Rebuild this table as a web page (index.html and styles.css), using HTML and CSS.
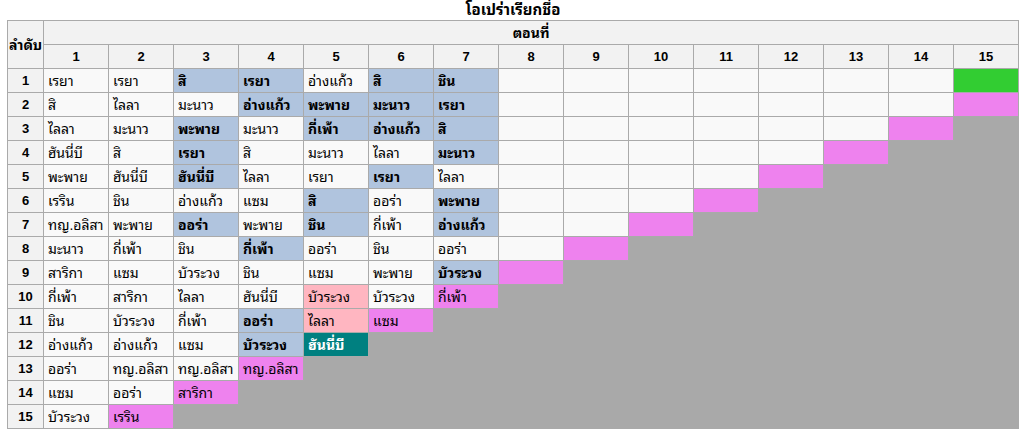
FILE: index.html
```html
<!DOCTYPE html>
<html lang="th">
<head>
<meta charset="utf-8">
<title>โอเปร่าเรียกชื่อ</title>
<link rel="stylesheet" href="styles.css">
</head>
<body>
<table class="wikitable">
<caption>โอเปร่าเรียกชื่อ</caption>
<colgroup>
<col class="c-rank">
<col span="15" class="c-ep">
</colgroup>
<thead>
<tr><th rowspan="2" class="rank-h">ลำดับ</th><th colspan="15" class="ep-h">ตอนที่</th></tr>
<tr><th>1</th><th>2</th><th>3</th><th>4</th><th>5</th><th>6</th><th>7</th><th>8</th><th>9</th><th>10</th><th>11</th><th>12</th><th>13</th><th>14</th><th>15</th></tr>
</thead>
<tbody>
<tr><th>1</th><td>เรยา</td><td>เรยา</td><td class="b">สิ</td><td class="b">เรยา</td><td>อ่างแก้ว</td><td class="b">สิ</td><td class="b">ชิน</td><td></td><td></td><td></td><td></td><td></td><td></td><td></td><td class="win"></td></tr>
<tr><th>2</th><td>สิ</td><td>ไลลา</td><td>มะนาว</td><td class="b">อ่างแก้ว</td><td class="b">พะพาย</td><td class="b">มะนาว</td><td class="b">เรยา</td><td></td><td></td><td></td><td></td><td></td><td></td><td></td><td class="v"></td></tr>
<tr><th>3</th><td>ไลลา</td><td>มะนาว</td><td class="b">พะพาย</td><td>มะนาว</td><td class="b">กี่เพ้า</td><td class="b">อ่างแก้ว</td><td class="b">สิ</td><td></td><td></td><td></td><td></td><td></td><td></td><td class="v"></td><td class="g"></td></tr>
<tr><th>4</th><td>ฮันนี่บี</td><td>สิ</td><td class="b">เรยา</td><td>สิ</td><td>มะนาว</td><td>ไลลา</td><td class="b">มะนาว</td><td></td><td></td><td></td><td></td><td></td><td class="v"></td><td class="g" colspan="2"></td></tr>
<tr><th>5</th><td>พะพาย</td><td>ฮันนี่บี</td><td class="b">ฮันนี่บี</td><td>ไลลา</td><td>เรยา</td><td class="b">เรยา</td><td>ไลลา</td><td></td><td></td><td></td><td></td><td class="v"></td><td class="g" colspan="3"></td></tr>
<tr><th>6</th><td>เรริน</td><td>ชิน</td><td>อ่างแก้ว</td><td>แซม</td><td class="b">สิ</td><td>ออร่า</td><td class="b">พะพาย</td><td></td><td></td><td></td><td class="v"></td><td class="g" colspan="4"></td></tr>
<tr><th>7</th><td>ทญ.อลิสา</td><td>พะพาย</td><td class="b">ออร่า</td><td>พะพาย</td><td class="b">ชิน</td><td>กี่เพ้า</td><td class="b">อ่างแก้ว</td><td></td><td></td><td class="v"></td><td class="g" colspan="5"></td></tr>
<tr><th>8</th><td>มะนาว</td><td>กี่เพ้า</td><td>ชิน</td><td class="b">กี่เพ้า</td><td>ออร่า</td><td>ชิน</td><td>ออร่า</td><td></td><td class="v"></td><td class="g" colspan="6"></td></tr>
<tr><th>9</th><td>สาริกา</td><td>แซม</td><td>บัวระวง</td><td>ชิน</td><td>แซม</td><td>พะพาย</td><td class="b">บัวระวง</td><td class="v"></td><td class="g" colspan="7"></td></tr>
<tr><th>10</th><td>กี่เพ้า</td><td>สาริกา</td><td>ไลลา</td><td>ฮันนี่บี</td><td class="p">บัวระวง</td><td>บัวระวง</td><td class="v">กี่เพ้า</td><td class="g" colspan="8"></td></tr>
<tr><th>11</th><td>ชิน</td><td>บัวระวง</td><td>กี่เพ้า</td><td class="b">ออร่า</td><td class="p">ไลลา</td><td class="v">แซม</td><td class="g" colspan="9"></td></tr>
<tr><th>12</th><td>อ่างแก้ว</td><td>อ่างแก้ว</td><td>แซม</td><td class="b">บัวระวง</td><td class="t">ฮันนี่บี</td><td class="g" colspan="10"></td></tr>
<tr><th>13</th><td>ออร่า</td><td>ทญ.อลิสา</td><td>ทญ.อลิสา</td><td class="v">ทญ.อลิสา</td><td class="g" colspan="11"></td></tr>
<tr><th>14</th><td>แซม</td><td>ออร่า</td><td class="v">สาริกา</td><td class="g" colspan="12"></td></tr>
<tr><th>15</th><td>บัวระวง</td><td class="v">เรริน</td><td class="g" colspan="13"></td></tr>
</tbody>
</table>
</body>
</html>
```

FILE: styles.css
```css
html, body {
  margin: 0;
  padding: 0;
  background: #fff;
}

body {
  padding: 0 0 0 7px;
  font-family: "Liberation Sans", "Noto Sans Thai Looped", "Noto Serif Thai", "Noto Sans Thai", Tahoma, sans-serif;
  font-size: 13px;
  color: #000;
}

.wikitable {
  border-collapse: collapse;
  table-layout: fixed;
  width: 1012px;
  background: #f9f9f9;
  border: 1px solid #aaa;
}

.wikitable caption {
  font-weight: bold;
  font-size: 15px;
  height: 20px;
  line-height: 20px;
  text-align: center;
}

.c-rank { width: 36px; }
.c-ep { width: 65px; }

.wikitable th,
.wikitable td {
  border: 1px solid #aaa;
  height: 23px;
  padding: 0 4px;
  line-height: 16px;
  white-space: nowrap;
  overflow: hidden;
}

.wikitable th {
  background: #f2f2f2;
  font-weight: bold;
  text-align: center;
}

.wikitable td {
  text-align: left;
  font-size: 14px;
}

.wikitable .rank-h,
.wikitable .ep-h {
  font-size: 14px;
}

.wikitable .rank-h {
  padding: 0 1px;
  overflow: visible;
}

.wikitable td.b { background: #b0c4de; font-weight: bold; }
.wikitable td.win { background: #32cd32; }
.wikitable td.v { background: #ee82ee; }
.wikitable td.p { background: #ffb6c1; }
.wikitable td.t { background: #008080; color: #fff; font-weight: bold; }
.wikitable td.g { background: #a9a9a9; border-color: #a9a9a9; }
```
